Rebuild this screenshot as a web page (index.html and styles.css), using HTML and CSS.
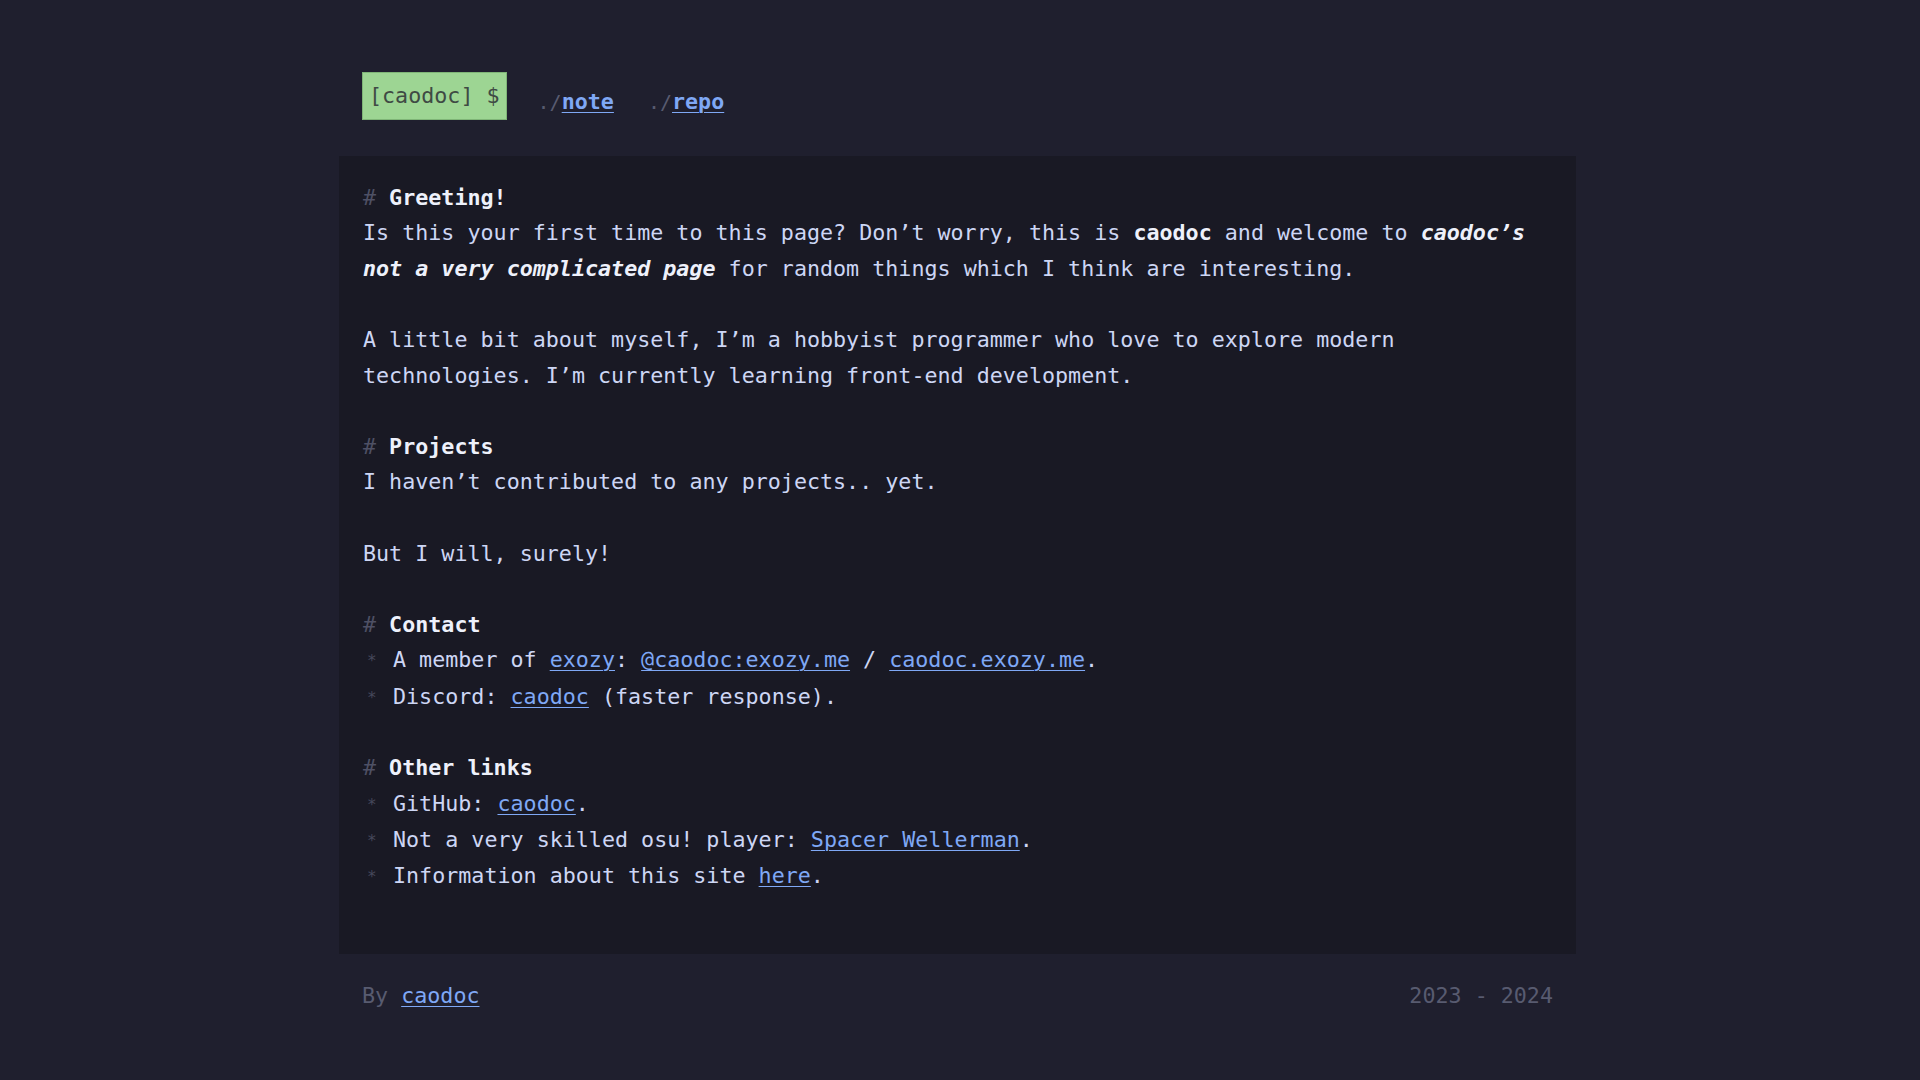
FILE: index.html
```html
<!DOCTYPE html>
<html lang="en">
<head>
<meta charset="utf-8">
<title>caodoc</title>
<link rel="stylesheet" href="styles.css">
</head>
<body>
<div class="page">
  <header class="header">
    <div class="prompt">[caodoc] $</div>
    <nav class="nav">
      <span class="nav-item"><span class="dim">./</span><a href="#">note</a></span>
      <span class="nav-item"><span class="dim">./</span><a href="#">repo</a></span>
    </nav>
  </header>

  <main class="card">
    <section class="section">
      <h2 class="title"><span class="hash">#</span> Greeting!</h2>
      <p>Is this your first time to this page? Don’t worry, this is <b>caodoc</b> and welcome to <b><i>caodoc’s not a very complicated page</i></b> for random things which I think are interesting.</p>
      <p>A little bit about myself, I’m a hobbyist programmer who love to explore modern technologies. I’m currently learning front-end development.</p>
    </section>

    <section class="section">
      <h2 class="title"><span class="hash">#</span> Projects</h2>
      <p>I haven’t contributed to any projects.. yet.</p>
      <p>But I will, surely!</p>
    </section>

    <section class="section">
      <h2 class="title"><span class="hash">#</span> Contact</h2>
      <ul class="list">
        <li>A member of <a href="#">exozy</a>: <a href="#">@caodoc:exozy.me</a> / <a href="#">caodoc.exozy.me</a>.</li>
        <li>Discord: <a href="#">caodoc</a> (faster response).</li>
      </ul>
    </section>

    <section class="section">
      <h2 class="title"><span class="hash">#</span> Other links</h2>
      <ul class="list">
        <li>GitHub: <a href="#">caodoc</a>.</li>
        <li>Not a very skilled osu! player: <a href="#">Spacer Wellerman</a>.</li>
        <li>Information about this site <a href="#">here</a>.</li>
      </ul>
    </section>
  </main>

  <footer class="footer">
    <span>By <a href="#">caodoc</a></span>
    <span>2023 - 2024</span>
  </footer>
</div>
</body>
</html>
```

FILE: styles.css
```css
* { box-sizing: border-box; }

html, body {
  margin: 0;
  padding: 0;
  background: #1f1f2e;
}

body {
  padding-right: 5px;
  font-family: "DejaVu Sans Mono", "Liberation Mono", monospace;
  font-size: 21.7px;
  line-height: 35.6px;
  color: #cdd6f4;
}

a {
  color: #7fa8f5;
  text-decoration: underline;
  text-underline-offset: 3px;
  text-decoration-thickness: 1px;
}

.page {
  width: 1237px;
  margin: 0 auto;
  padding-top: 72px;
}

.header {
  display: flex;
  align-items: flex-start;
  padding: 0 23px;
  gap: 31px;
}

.prompt {
  background: #9dd593;
  border: 1px solid #7fb577;
  color: #3f4a44;
  height: 48px;
  padding: 0 6px;
  display: flex;
  align-items: center;
}

.nav {
  display: flex;
  gap: 34px;
  padding-top: 12px;
}

.nav-item a {
  font-weight: bold;
}

.dim {
  color: #585b70;
  font-size: 20px;
}

.card {
  margin-top: 35px;
  background: #191924;
  padding: 24px 24px 24px;
}

.section p,
.section .list {
  margin: 0 0 35.6px;
}

.title {
  margin: 0;
  font-size: inherit;
  line-height: inherit;
  font-weight: bold;
  color: #eef1fb;
}

.hash {
  color: #4e5064;
  font-weight: normal;
}

b { color: #eef1fb; }

.list {
  list-style: none;
  padding: 0;
}

.list li {
  height: 36.2px;
  line-height: 36.2px;
}

.list li::before {
  content: "*";
  display: inline-block;
  width: 26px;
  padding-left: 4px;
  color: #45475a;
  font-size: 16px;
  line-height: 1;
  vertical-align: 1px;
}

.footer {
  display: flex;
  justify-content: space-between;
  padding: 24px 23px 0;
  color: #585b70;
}
```
